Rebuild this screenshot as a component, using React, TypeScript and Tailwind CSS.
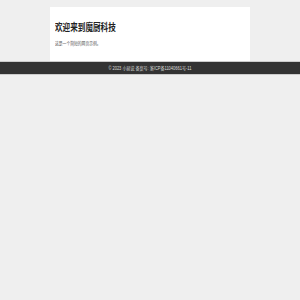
export default function App() {
  return (
    <div className="min-h-[300px] bg-[#efefef] pt-[7px] font-['Liberation_Sans','Noto_Sans_CJK_SC',sans-serif]">
      {/* 内容区 */}
      <main className="mx-auto h-[54px] w-[200px] bg-white px-[5px] pt-[16px]">
        <h1 className="origin-left scale-x-[0.76] whitespace-nowrap text-[10px] font-bold leading-[10px] text-[#222]">
          欢迎来到魔厨科技
        </h1>
        <p className="mt-[8px] origin-left scale-x-[0.76] whitespace-nowrap text-[5px] leading-[5px] text-[#555]">
          这是一个简短的网页示例。
        </p>
      </main>

      {/* 页脚 */}
      <footer className="flex h-[14px] items-center justify-center border-y border-[#ccc] bg-[#333]">
        <span className="scale-x-[0.8] whitespace-nowrap text-[5px] leading-[5px] text-[#ddd]">
          © 2023 小厨说 备案号: 浙ICP备11040661号-11
        </span>
      </footer>
    </div>
  )
}
